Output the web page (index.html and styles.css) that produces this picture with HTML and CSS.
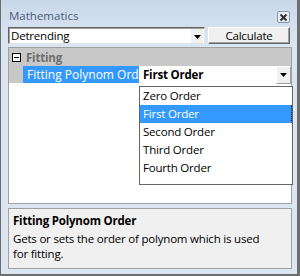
FILE: index.html
```html
<!DOCTYPE html>
<html>
<head>
<meta charset="utf-8">
<link rel="stylesheet" href="styles.css">
</head>
<body>
<div class="window">
  <div class="titlebar">
    <span class="title">Mathematics</span>
    <span class="close"><svg width="9" height="9" viewBox="0 0 9 9"><path d="M1.5 1.5L7.5 7.5M7.5 1.5L1.5 7.5" stroke="#333" stroke-width="2"/></svg></span>
  </div>
  <div class="toolbar">
    <div class="combo">
      <span class="combo-text">Detrending</span>
      <span class="combo-arrow"><svg width="7" height="4" viewBox="0 0 7 4"><path d="M0 0H7L3.5 4Z" fill="#000"/></svg></span>
    </div>
    <button class="btn">Calculate</button>
  </div>
  <div class="grid">
    <div class="cat-row">
      <span class="toggle"><span class="minus"></span></span>
      <span class="cat-label">Fitting</span>
    </div>
    <div class="prop-row">
      <span class="margin"></span>
      <span class="prop-label">Fitting Polynom Order</span>
      <span class="prop-value">
        <span class="value-text">First Order</span>
        <span class="value-arrow"><svg width="7" height="4" viewBox="0 0 7 4"><path d="M0 0H7L3.5 4Z" fill="#000"/></svg></span>
      </span>
    </div>
    <ul class="list">
      <li>Zero Order</li>
      <li class="sel">First Order</li>
      <li>Second Order</li>
      <li>Third Order</li>
      <li>Fourth Order</li>
    </ul>
  </div>
  <div class="desc">
    <div class="desc-title">Fitting Polynom Order</div>
    <div class="desc-text">Gets or sets the order of polynom which is used for fitting.</div>
  </div>
</div>
</body>
</html>
```
FILE: styles.css
```css
* { box-sizing: border-box; }
html, body { margin: 0; padding: 0; }
body {
  width: 300px;
  height: 276px;
  font-family: "Open Sans", "Noto Sans", sans-serif;
  font-size: 11.5px;
  letter-spacing: -0.2px;
  color: #000;
  overflow: hidden;
}
.window {
  width: 300px;
  height: 276px;
  border-left: 1px solid #6e6e6e;
  border-right: 3px solid #6e6e6e;
  border-bottom: 2px solid #6e6e6e;
  background: linear-gradient(to bottom, #c9d7e9 0px, #dae5f2 40px, #dce6f2 100%);
  padding: 0 5px 0 7px;
  display: flex;
  flex-direction: column;
}
.titlebar {
  height: 27px;
  display: flex;
  align-items: flex-start;
  justify-content: space-between;
  padding-top: 8px;
}
.title {
  color: #4b5d78;
  line-height: 16px;
  padding-left: 1px;
  font-size: 11.5px;
  letter-spacing: 0;
}
.close {
  width: 13px;
  height: 12px;
  margin-top: 3px;
  margin-right: 2px;
  border: 1px solid #8a96a8;
  border-radius: 2px;
  background: #e6edf6;
  display: flex;
  align-items: center;
  justify-content: center;
}
.toolbar {
  display: flex;
  height: 17px;
  gap: 3px;
}
.combo {
  width: 197px;
  height: 17px;
  background: #fff;
  border-top: 1px solid #646464;
  border-left: 1px solid #646464;
  border-right: 1px solid #e3e3e3;
  border-bottom: 1px solid #e3e3e3;
  box-shadow: inset 1px 1px 0 #a0a0a0;
  display: flex;
  align-items: center;
  justify-content: space-between;
}
.combo-text {
  padding-left: 2px;
  line-height: 15px;
  color: #000;
}
.combo-arrow {
  width: 13px;
  height: 14px;
  margin-top: 1px;
  background: #f0f0f0;
  border-right: 1px solid #fff;
  display: flex;
  align-items: center;
  justify-content: center;
  padding-top: 2px;
}
.btn {
  width: 82px;
  height: 17px;
  padding: 0;
  margin: 0;
  font: inherit;
  letter-spacing: inherit;
  line-height: 14px;
  color: #000;
  background: #f0f0f0;
  border-top: 1px solid #fff;
  border-left: 1px solid #fff;
  border-right: 1px solid #646464;
  border-bottom: 1px solid #646464;
  box-shadow: inset -1px -1px 0 #a0a0a0;
}
.grid {
  position: relative;
  margin-top: 3px;
  height: 157px;
  width: 284px;
  background: #fff;
  border: 1px solid #a0a0a0;
}
.cat-row {
  height: 18px;
  background: #c8c8c8;
  display: flex;
  align-items: center;
}
.toggle {
  width: 9px;
  height: 9px;
  margin-left: 3px;
  border: 1px solid #000;
  background: #fff;
  display: flex;
  align-items: center;
  justify-content: center;
}
.minus {
  width: 5px;
  height: 1px;
  background: #000;
}
.cat-label {
  margin-left: 5px;
  font-weight: bold;
  color: #6d6d6d;
}
.prop-row {
  height: 18px;
  display: flex;
  border-bottom: 1px solid #fff;
}
.margin {
  width: 14px;
  background: #c8c8c8;
}
.prop-label {
  width: 116px;
  background: #3399ff;
  color: #fff;
  padding-left: 4px;
  white-space: nowrap;
  overflow: hidden;
  line-height: 17px;
  margin-right: 1px;
  font-size: 12px;
  letter-spacing: 0;
}
.prop-value {
  flex: 1;
  display: flex;
  align-items: center;
  justify-content: space-between;
  background: #fff;
}
.value-text {
  font-weight: bold;
  padding-left: 3px;
}
.value-arrow {
  width: 15px;
  height: 18px;
  background: #f0f0f0;
  border-left: 1px solid #fff;
  border-top: 1px solid #fff;
  border-right: 1px solid #a0a0a0;
  border-bottom: 1px solid #a0a0a0;
  display: flex;
  align-items: center;
  justify-content: center;
}
.list {
  position: absolute;
  left: 130px;
  top: 38px;
  width: 154px;
  height: 99px;
  margin: 0;
  padding: 0;
  list-style: none;
  background: #fff;
  border: 1px solid #646464;
}
.list li {
  height: 18px;
  line-height: 16px;
  padding-left: 2px;
  border: 1px solid transparent;
}
.list li.sel {
  background: #3399ff;
  color: #fff;
  border-right: 1px dotted #000;
}
.desc {
  margin-top: 4px;
  height: 61px;
  width: 284px;
  background: #f0f0f0;
  border: 1px solid #a0a0a0;
  padding: 4px 4px 0 4px;
  line-height: 15px;
}
.desc-title {
  font-weight: bold;
  margin-bottom: 3px;
}
.desc-text {
  width: 260px;
}
```
